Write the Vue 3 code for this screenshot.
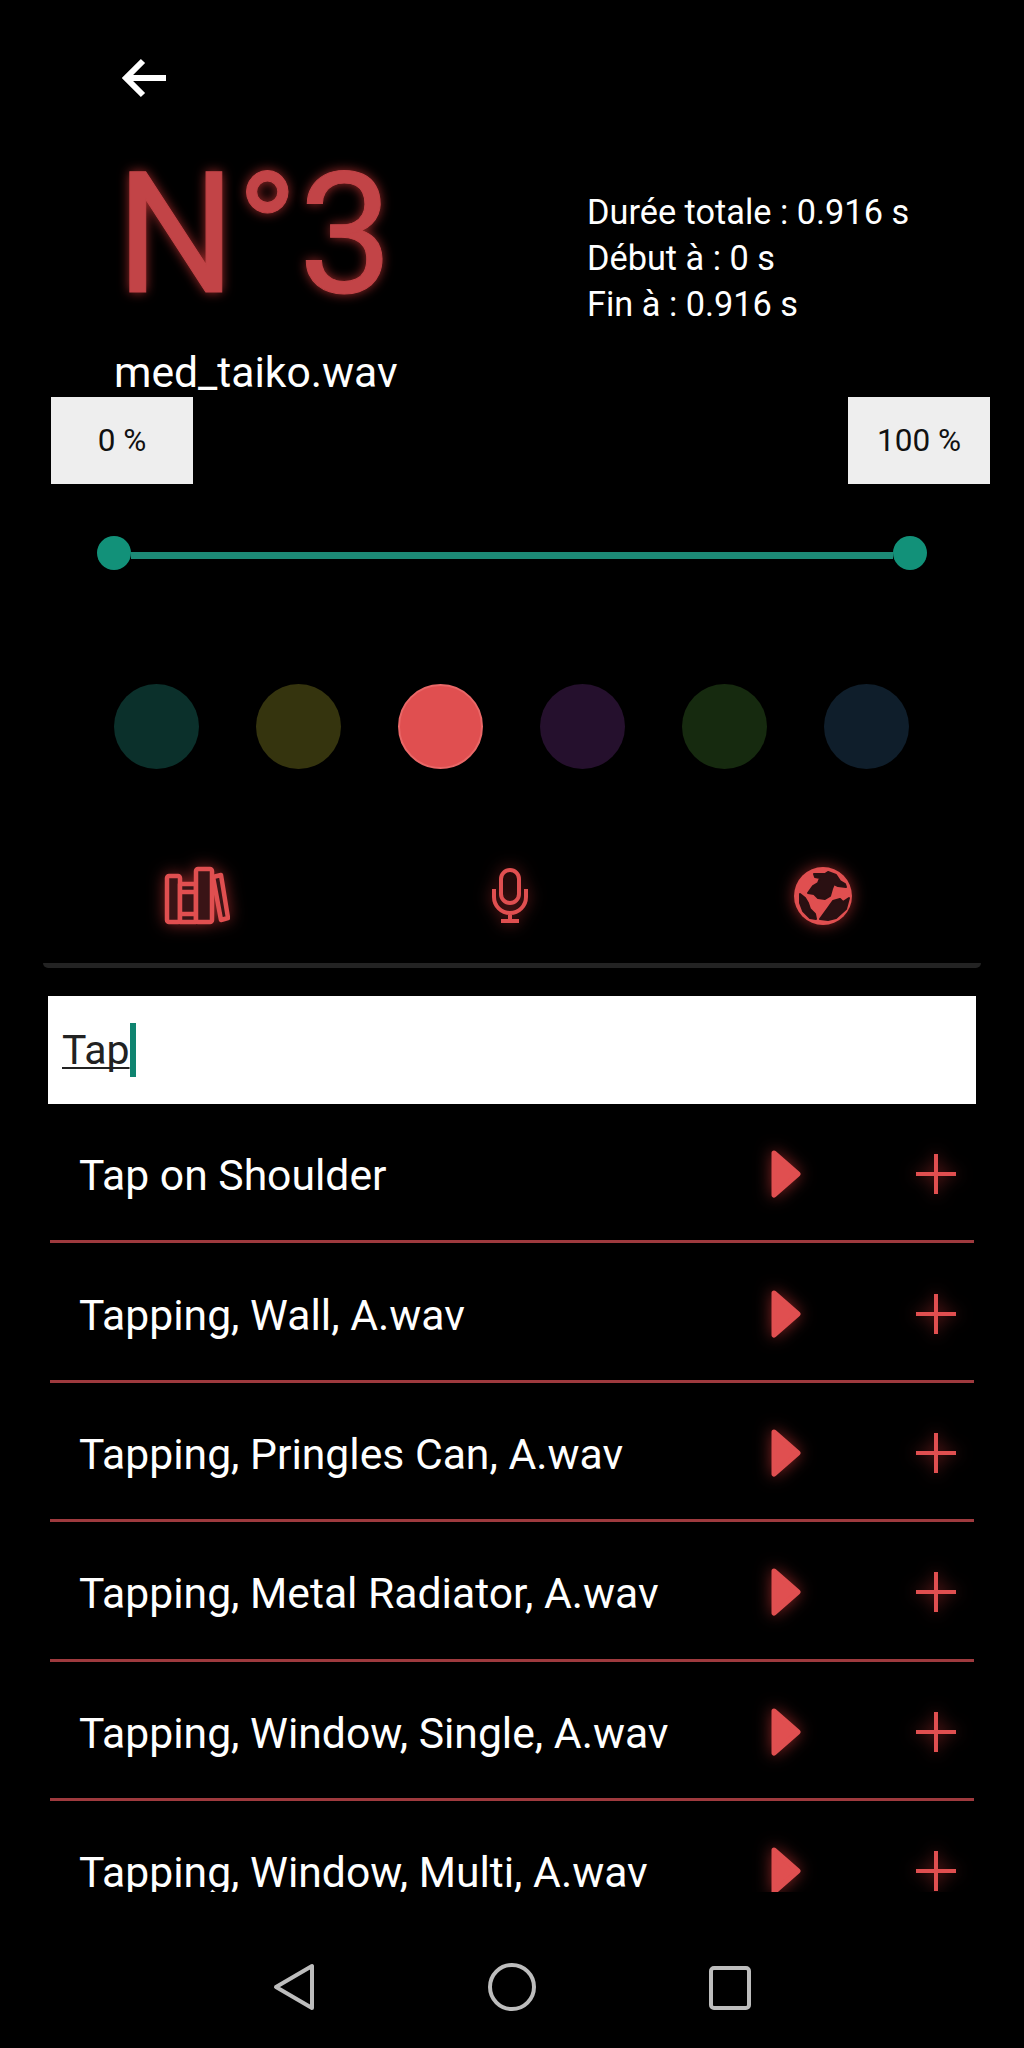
<script setup>
const swatches = [
  { color: '#0b302b' },
  { color: '#35340e' },
  { color: '#e04f50', active: true },
  { color: '#25102d' },
  { color: '#162a0f' },
  { color: '#0f1e2b' },
]
const sounds = [
  'Tap on Shoulder',
  'Tapping, Wall, A.wav',
  'Tapping, Pringles Can, A.wav',
  'Tapping, Metal Radiator, A.wav',
  'Tapping, Window, Single, A.wav',
  'Tapping, Window, Multi, A.wav',
]
</script>

<template>
  <div class="page">
    <div class="back-row">
      <svg class="back" width="50" height="44" viewBox="0 0 50 44">
        <path d="M46 22H6M23 5 6 22l17 17" fill="none" stroke="#fff" stroke-width="6" />
      </svg>
    </div>

    <div class="hero">
      <div class="number">N°3</div>
      <div class="info">
        <div>Durée totale : 0.916 s</div>
        <div>Début à : 0 s</div>
        <div>Fin à : 0.916 s</div>
      </div>
    </div>

    <div class="file">med_taiko.wav</div>

    <div class="bounds">
      <div class="bound">0 %</div>
      <div class="bound">100 %</div>
    </div>

    <div class="slider">
      <span class="thumb"></span>
      <span class="track"></span>
      <span class="thumb"></span>
    </div>

    <div class="swatches">
      <span
        v-for="(s, i) in swatches"
        :key="i"
        class="swatch"
        :class="{ active: s.active }"
        :style="{ background: s.color }"
      ></span>
    </div>

    <div class="tabs">
      <svg class="glow" width="66" height="60" viewBox="-1 -2 66 60">
        <g fill="#3a1416" stroke="#e04f50" stroke-width="4.5" stroke-linejoin="round">
          <rect x="2" y="8" width="13" height="46" rx="2" />
          <rect x="15" y="16" width="16" height="38" />
          <rect x="31" y="1" width="16" height="53" rx="2" />
          <path d="M48 9l8-2 7 43-7 2z" />
          <path d="M15 24h16M15 46h16" fill="none" />
        </g>
      </svg>
      <svg class="glow" width="38" height="56" viewBox="0 0 38 56">
        <g fill="none" stroke="#e04f50" stroke-width="4">
          <rect x="10" y="2" width="18" height="33" rx="9" />
          <path d="M3 21v8a16 16 0 0 0 32 0v-8M19 45v8M10 53h18" />
        </g>
      </svg>
      <svg class="glow" width="60" height="60" viewBox="-1 -1 60 60">
        <circle cx="29" cy="29" r="29" fill="#e04f50" />
        <g fill="#2a1012" stroke="#2a1012" stroke-width="2" stroke-linejoin="round">
          <path d="M20 7 31 7 34 5 42 8 46 14 51 17 52 20 44 19 40 17 38 22 36 29 31 32 24 31 20 27 14 26 19 19 24 16 26 11 21 10z" />
          <path d="M6 27 11 31 14 36 16 42 21 47 22 52 16 51 9 44 6 36z" />
          <path d="M26 52 34 41 39 34 46 32 49 35 55 31 52 42 42 51 34 53z" />
        </g>
      </svg>
    </div>

    <div class="divider"></div>

    <div class="search">
      <span class="query">Tap</span><span class="caret"></span>
    </div>

    <div class="list">
      <div v-for="name in sounds" :key="name" class="row">
        <span class="name">{{ name }}</span>
        <svg class="glow play" width="32" height="50" viewBox="0 0 32 50">
          <path d="M4 4 28 25 4 46z" fill="#e04f50" stroke="#e04f50" stroke-width="5" stroke-linejoin="round" />
        </svg>
        <svg class="glow plus" width="42" height="42" viewBox="0 0 42 42">
          <path d="M21 1v40M1 21h40" fill="none" stroke="#e04f50" stroke-width="4" />
        </svg>
      </div>
    </div>

    <div class="nav">
      <svg width="42" height="48" viewBox="0 0 42 48">
        <path d="M39 3v42L3 24z" fill="none" stroke="#bdbdbd" stroke-width="4" stroke-linejoin="round" />
      </svg>
      <svg width="48" height="48" viewBox="0 0 48 48">
        <circle cx="24" cy="24" r="22" fill="none" stroke="#bdbdbd" stroke-width="4" />
      </svg>
      <svg class="square" width="42" height="44" viewBox="0 0 42 44">
        <rect x="2" y="2" width="38" height="40" rx="3" fill="none" stroke="#bdbdbd" stroke-width="4" />
      </svg>
    </div>
  </div>
</template>

<style>
html, body { background: #000; }
</style>

<style scoped>
.page {
  width: 1024px;
  height: 2048px;
  background: #000;
  color: #fff;
  font-family: Roboto, "Liberation Sans", sans-serif;
  overflow: hidden;
  display: flex;
  flex-direction: column;
}
.back-row { height: 160px; padding: 56px 0 0 120px; box-sizing: border-box; }
.back { display: block; }
.hero { display: flex; height: 170px; align-items: flex-start; padding-left: 116px; }
.number {
  width: 471px;
  font-size: 168px;
  line-height: 150px;
  color: #c24447;
  -webkit-text-stroke: 1px #c24447;
  text-shadow: 0 0 12px rgba(224, 60, 60, .75);
}
.info { font-size: 34.3px; line-height: 46px; padding-top: 29px; }
.file { font-size: 42.67px; line-height: 48px; padding-left: 114px; margin-top: 18px; margin-bottom: 1px; }
.bounds { display: flex; justify-content: space-between; padding: 0 34px 0 51px; }
.bound {
  width: 142px;
  height: 87px;
  background: #eee;
  color: #111;
  font-size: 31.5px;
  display: flex;
  align-items: center;
  justify-content: center;
}
.slider { display: flex; align-items: center; margin: 52px 0 0 97px; width: 830px; height: 34px; }
.thumb { width: 34px; height: 34px; border-radius: 50%; background: #129179; flex: none; }
.track { flex: 1; height: 7px; background: #1c8a76; margin-top: 4px; }
.swatches { display: flex; gap: 57px; margin: 114px 0 0 114px; }
.swatch { width: 85px; height: 85px; border-radius: 50%; flex: none; box-sizing: border-box; }
.swatch.active { border: 2px solid #e96767; }
.tabs {
  display: grid;
  grid-template-columns: 1fr 1fr 1fr;
  margin: 97px 0 0 40px;
  width: 940px;
  height: 60px;
  align-items: center;
  justify-items: center;
}
.glow { filter: drop-shadow(0 0 8px rgba(224, 60, 60, .6)); flex: none; }
.divider { height: 5px; margin: 37px 43px 0; background: #232323; border-radius: 0 0 6px 6px; }
.search {
  margin: 28px 48px 0;
  height: 108px;
  background: #fff;
  color: #222;
  font-size: 41px;
  display: flex;
  align-items: center;
  padding-left: 14px;
}
.query {
  text-decoration: underline;
  text-decoration-thickness: 2px;
  text-underline-offset: 3px;
  text-decoration-skip-ink: none;
}
.caret { width: 6px; height: 54px; background: #0f8470; }
.list { height: 788px; overflow: hidden; }
.row {
  height: 139.4px;
  box-sizing: border-box;
  margin: 0 50px;
  padding: 4px 0 0 29px;
  border-bottom: 3px solid #9e3a3e;
  display: flex;
  align-items: center;
}
.name { flex: 1; font-size: 42.67px; white-space: nowrap; padding-top: 2px; }
.play { margin-right: 113px; }
.plus { margin-right: 17px; }
.nav {
  flex: 1;
  display: flex;
  justify-content: center;
  gap: 173px;
  padding-top: 71px;
  align-items: flex-start;
}
.square { margin-top: 3px; }
</style>
